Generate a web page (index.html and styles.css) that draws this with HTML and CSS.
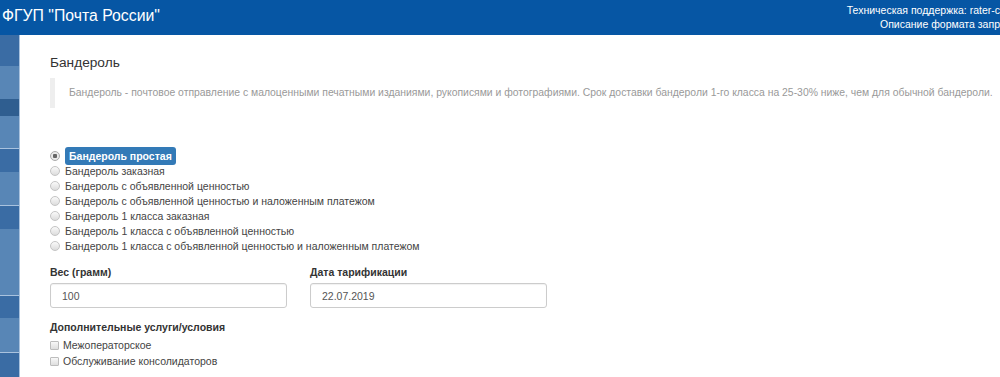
FILE: index.html
```html
<!DOCTYPE html>
<html lang="ru">
<head>
  <meta charset="UTF-8">
  <title>Тарификатор</title>
  <link rel="stylesheet" href="styles.css">
</head>
<body>
  <header class="topbar">
    <div class="brand">ФГУП "Почта России"</div>
    <div class="support">
      <div>Техническая поддержка: rater-c</div>
      <div>Описание формата запр</div>
    </div>
  </header>
  <div class="layout">
    <aside class="sidebar">
      <div class="tab dark" style="height:31px"></div>
      <div class="tab light" style="height:33px"></div>
      <div class="tab darkest" style="height:17px"></div>
      <div class="tab light" style="height:32px"></div>
      <div class="sep"></div>
      <div class="tab dark" style="height:23px"></div>
      <div class="tab light" style="height:33px"></div>
      <div class="sep"></div>
      <div class="tab dark" style="height:23px"></div>
      <div class="tab light" style="height:66px"></div>
      <div class="sep"></div>
      <div class="tab dark" style="height:22px"></div>
      <div class="tab light" style="height:34px"></div>
      <div class="sep"></div>
      <div class="tab dark grow"></div>
    </aside>
    <main class="content">
      <h3 class="title">Бандероль</h3>
      <blockquote class="note">Бандероль - почтовое отправление с малоценными печатными изданиями, рукописями и фотографиями. Срок доставки бандероли 1-го класса на 25-30% ниже, чем для обычной бандероли.</blockquote>

      <div class="options">
        <label class="option"><input type="radio" name="kind" checked><span class="badge">Бандероль простая</span></label>
        <label class="option"><input type="radio" name="kind"><span>Бандероль заказная</span></label>
        <label class="option"><input type="radio" name="kind"><span>Бандероль с объявленной ценностью</span></label>
        <label class="option"><input type="radio" name="kind"><span>Бандероль с объявленной ценностью и наложенным платежом</span></label>
        <label class="option"><input type="radio" name="kind"><span>Бандероль 1 класса заказная</span></label>
        <label class="option"><input type="radio" name="kind"><span>Бандероль 1 класса с объявленной ценностью</span></label>
        <label class="option"><input type="radio" name="kind"><span>Бандероль 1 класса с объявленной ценностью и наложенным платежом</span></label>
      </div>

      <div class="fields">
        <div class="field">
          <label class="field-label">Вес (грамм)</label>
          <input class="input" type="text" value="100">
        </div>
        <div class="field">
          <label class="field-label">Дата тарификации</label>
          <input class="input" type="text" value="22.07.2019">
        </div>
      </div>

      <div class="field-label extra">Дополнительные услуги/условия</div>
      <div class="checks">
        <label class="check"><input type="checkbox"><span>Межоператорское</span></label>
        <label class="check"><input type="checkbox"><span>Обслуживание консолидаторов</span></label>
      </div>
    </main>
  </div>
</body>
</html>
```

FILE: styles.css
```css
:root {
  --brand: #0656a4;
  --tab-dark: #3a6ca4;
  --tab-light: #5886b6;
  --tab-darkest: #2f5e90;
  --tab-line: #a9c2de;
  --text: #333;
}
html, body { margin: 0; height: 100%; overflow: hidden; }
body {
  font-family: "Liberation Sans", Arial, sans-serif;
  font-size: 10.5px;
  color: var(--text);
  background: #fff;
}
.topbar {
  display: flex; justify-content: space-between;
  height: 35px;
  background: var(--brand);
  color: #fff;
  overflow: hidden;
}
.brand { font-size: 15.8px; line-height: 32px; padding-left: 2px; white-space: nowrap; }
.support {
  text-align: right;
  line-height: 14px;
  padding-top: 3px;
  white-space: nowrap;
}
.layout { display: flex; height: calc(100% - 35px); }
.sidebar {
  width: 19px;
  border-right: 1px solid var(--tab-line);
  display: flex; flex-direction: column;
}
.tab { flex-shrink: 0; }
.tab.dark { background: var(--tab-dark); }
.tab.light { background: var(--tab-light); }
.tab.darkest { background: var(--tab-darkest); }
.tab.grow { flex: 1; }
.sep { height: 1px; background: var(--tab-line); flex-shrink: 0; }
.content { flex: 1; padding: 18px 0 0 30px; min-width: 0; }
.title { margin: 0 0 5px; font-size: 13.7px; font-weight: normal; line-height: 20px; }
.note {
  margin: 0;
  padding: 8px 0 8px 14px;
  border-left: 5px solid #eee;
  font-size: 10.4px;
  line-height: 14px;
  color: #999;
  white-space: nowrap;
}
.options { margin-top: 40px; display: flex; flex-direction: column; }
.option { display: flex; align-items: center; height: 15px; color: #444; }
.option input {
  appearance: none;
  width: 10px; height: 10px;
  margin: 0 5px 0 0;
  border-radius: 50%;
  border: 1px solid #c4c4c4;
  background: linear-gradient(#fafafa, #dcdcdc);
  flex-shrink: 0;
}
.option input:checked { background: radial-gradient(circle, #666 0 2px, #e9e9e9 2.5px); border-color: #aaa; }
.badge {
  background: #337ab7;
  color: #fff;
  font-weight: bold;
  line-height: 18px;
  padding: 0 4px;
  border-radius: 3px;
}
.fields { display: grid; grid-template-columns: 237px 237px; column-gap: 23px; margin-top: 12px; }
.field { display: flex; flex-direction: column; gap: 3px; }
.field-label { font-weight: bold; line-height: 15px; }
.input {
  height: 25px;
  box-sizing: border-box;
  border: 1px solid #ccc;
  border-radius: 3px;
  padding: 0 11px;
  font: inherit;
  color: #555;
  box-shadow: inset 0 1px 1px rgba(0,0,0,.06);
}
.extra { margin-top: 12px; }
.checks { margin-top: 2px; display: flex; flex-direction: column; }
.check { display: flex; align-items: center; height: 16px; color: #444; }
.check input {
  appearance: none;
  width: 9px; height: 9px;
  margin: 0 4px 0 0;
  border: 1px solid #bdbdbd;
  border-radius: 1px;
  background: linear-gradient(#f8f8f8, #dedede);
  flex-shrink: 0;
}
```
